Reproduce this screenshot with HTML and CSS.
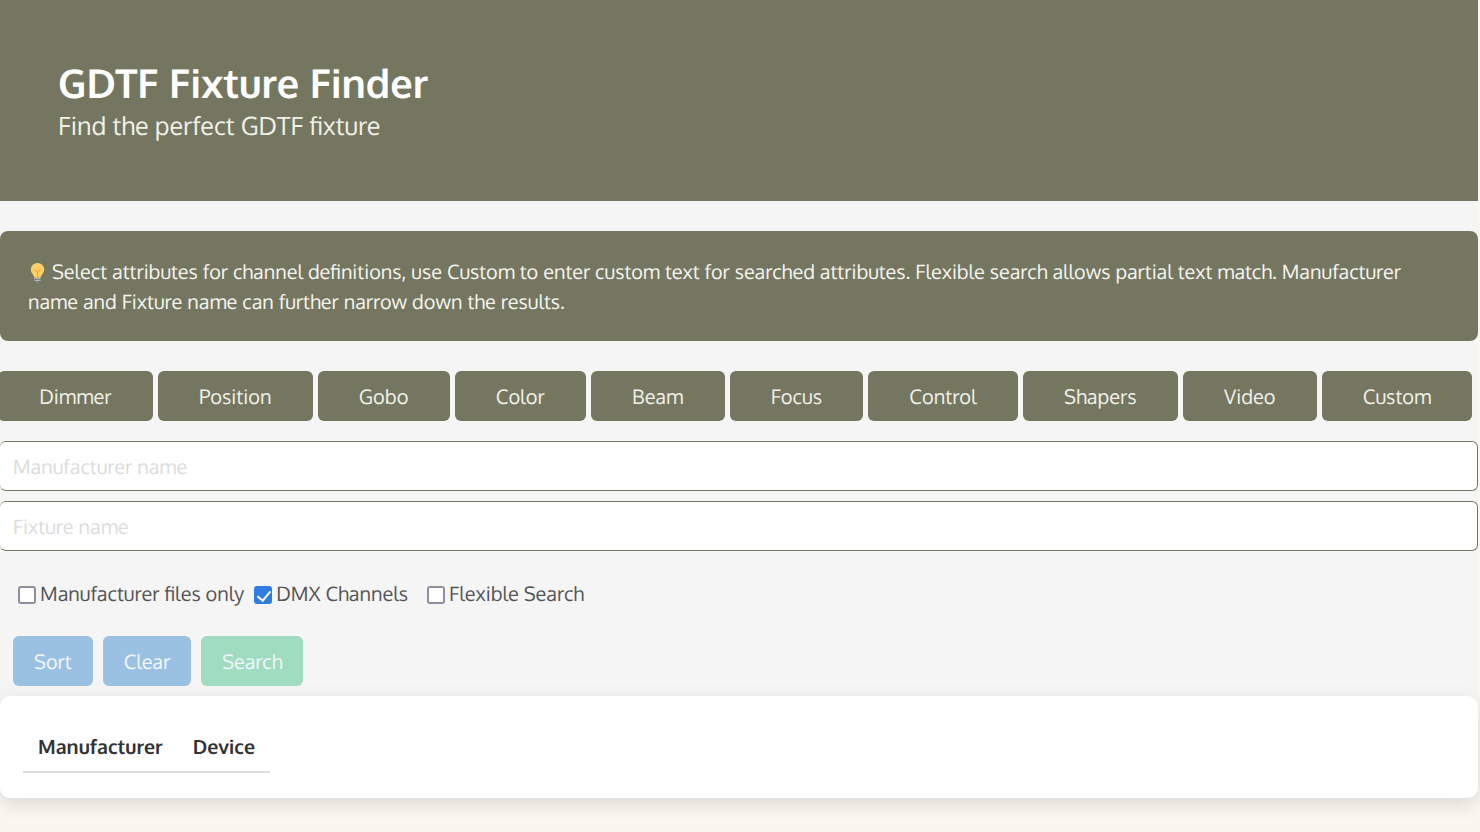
FILE: index.html
```html
<!DOCTYPE html>
<html lang="en">
<head>
<meta charset="utf-8">
<title>GDTF Fixture Finder</title>
<link rel="stylesheet" href="styles.css">
</head>
<body>
<div class="page">
  <header class="hero">
    <h1 class="hero-title">GDTF Fixture Finder</h1>
    <p class="hero-sub">Find the perfect GDTF fixture</p>
  </header>
  <main class="main">
    <div class="info"><svg class="bulb" viewBox="0 0 20 24" aria-hidden="true"><path d="M10 1a7.6 7.6 0 0 0-7.6 7.6c0 2.7 1.3 4.3 2.5 5.9.9 1.2 1.4 2.3 1.6 3.5h7c.2-1.2.7-2.3 1.6-3.5 1.200-1.600 2.500-3.200 2.500-5.900A7.600 7.600 0 0 0 10 1z" fill="#fdd067"/><path d="M6.500 8.500 10 12l3.500-3.500M10 12v6" fill="none" stroke="#f5a83c" stroke-width="1.200"/><path d="M6.500 18h7v1.500h-7zM6.500 20.300h7v1.300h-7z" fill="#a9b4bd"/><path d="M8 22.300h4l-.8 1.200H8.800z" fill="#8f9aa3"/></svg> Select attributes for channel definitions, use Custom to enter custom text for searched attributes. Flexible search allows partial text match. Manufacturer name and Fixture name can further narrow down the results.</div>
    <div class="tabs">
      <button class="tab">Dimmer</button>
      <button class="tab">Position</button>
      <button class="tab">Gobo</button>
      <button class="tab">Color</button>
      <button class="tab">Beam</button>
      <button class="tab">Focus</button>
      <button class="tab">Control</button>
      <button class="tab">Shapers</button>
      <button class="tab">Video</button>
      <button class="tab">Custom</button>
    </div>
    <input class="field" type="text" placeholder="Manufacturer name">
    <input class="field" type="text" placeholder="Fixture name">
    <div class="checks">
      <label class="check"><input type="checkbox" class="box">Manufacturer files only</label>
      <label class="check check-wide"><input type="checkbox" class="box" checked>DMX Channels</label>
      <label class="check"><input type="checkbox" class="box">Flexible Search</label>
    </div>
    <div class="actions">
      <button class="act blue">Sort</button>
      <button class="act blue">Clear</button>
      <button class="act green">Search</button>
    </div>
    <section class="card">
      <table class="results">
        <thead><tr><th>Manufacturer</th><th>Device</th></tr></thead>
      </table>
    </section>
  </main>
</div>
</body>
</html>
```
FILE: styles.css
```css
* { box-sizing: border-box; }
html, body { margin: 0; height: 832px; overflow: hidden; }
body {
  background: #fbf6ef;
  font-family: Oxygen, "Noto Sans", sans-serif;
  color: #333;
  text-rendering: geometricPrecision;
}
.page { width: 1478px; }
.hero {
  background: #757660;
  height: 201px;
  padding: 57px 58px 0;
  color: #fff;
}
.hero-title { margin: 0; font-size: 39.7px; line-height: 52px; font-weight: 700; }
.hero-sub { margin: 0; font-size: 25.1px; line-height: 33px; color: #f0f0e8; }
.main {
  background: #f5f5f5;
  padding-top: 30px;
  height: 598px;
}
.info {
  background: #757660;
  color: #f4f4f0;
  border-radius: 8px;
  height: 110px;
  padding: 26px 28px;
  font-size: 19.85px;
  line-height: 30px;
}
.bulb { display: inline-block; width: 19px; height: 21px; vertical-align: -4px; }
.tabs { display: flex; gap: 5px; margin: 30px 0 0 -2px; }
.tab {
  height: 50px;
  padding: 0 41.2px;
  border: 0;
  border-radius: 6px;
  background: #757660;
  color: #f0f0e8;
  font: 400 20px Oxygen, "Noto Sans", sans-serif;
  text-rendering: geometricPrecision;
}
.field {
  display: block;
  width: 100%;
  height: 50px;
  margin-top: 10px;
  padding: 0 13px;
  border: 1px solid #757660;
  border-left: 0;
  border-radius: 6px;
  background: #fff;
  font: 400 19.85px Oxygen, "Noto Sans", sans-serif;
  text-rendering: geometricPrecision;
}
.tabs + .field { margin-top: 20px; }
.field::placeholder { color: #dcdcdc; opacity: 1; }
.checks { display: flex; gap: 10px; margin-top: 28px; padding-left: 18px; }
.check {
  display: flex;
  align-items: center;
  font-size: 19.9px;
  line-height: 30px;
  color: #555;
}
.check-wide { margin-right: 9px; }
.box {
  appearance: none;
  position: relative;
  width: 18px;
  height: 18px;
  margin: 2px 4px 0 0;
  border: 2px solid #8f8f9d;
  border-radius: 3px;
  background: #fff;
}
.box:checked { background: #2f7de1; border-color: #2f7de1; }
.box:checked::after {
  content: "";
  position: absolute;
  left: 4px;
  top: 0;
  width: 6px;
  height: 11px;
  border: solid #fff;
  border-width: 0 2.4px 2.4px 0;
  transform: rotate(40deg);
}
.actions { display: flex; gap: 10px; margin-top: 27px; padding-left: 13px; }
.act {
  height: 50px;
  padding: 0 21px;
  border: 0;
  border-radius: 6px;
  color: #f2f7fb;
  font: 400 19.85px Oxygen, "Noto Sans", sans-serif;
  text-rendering: geometricPrecision;
}
.blue { background: #9ac1e2; }
.green { background: #a0dcc0; }
.card {
  height: 102px;
  margin-top: 10px;
  padding: 23px;
  background: #fff;
  border-radius: 10px;
  box-shadow: 0 6px 20px rgba(0,0,0,.12);
}
.results { border-collapse: collapse; }
.results th {
  height: 53px;
  padding: 2px 15px 0;
  font-size: 19.65px;
  font-weight: 700;
  color: #333;
  text-align: left;
  border-bottom: 2px solid #ddd;
}
```
